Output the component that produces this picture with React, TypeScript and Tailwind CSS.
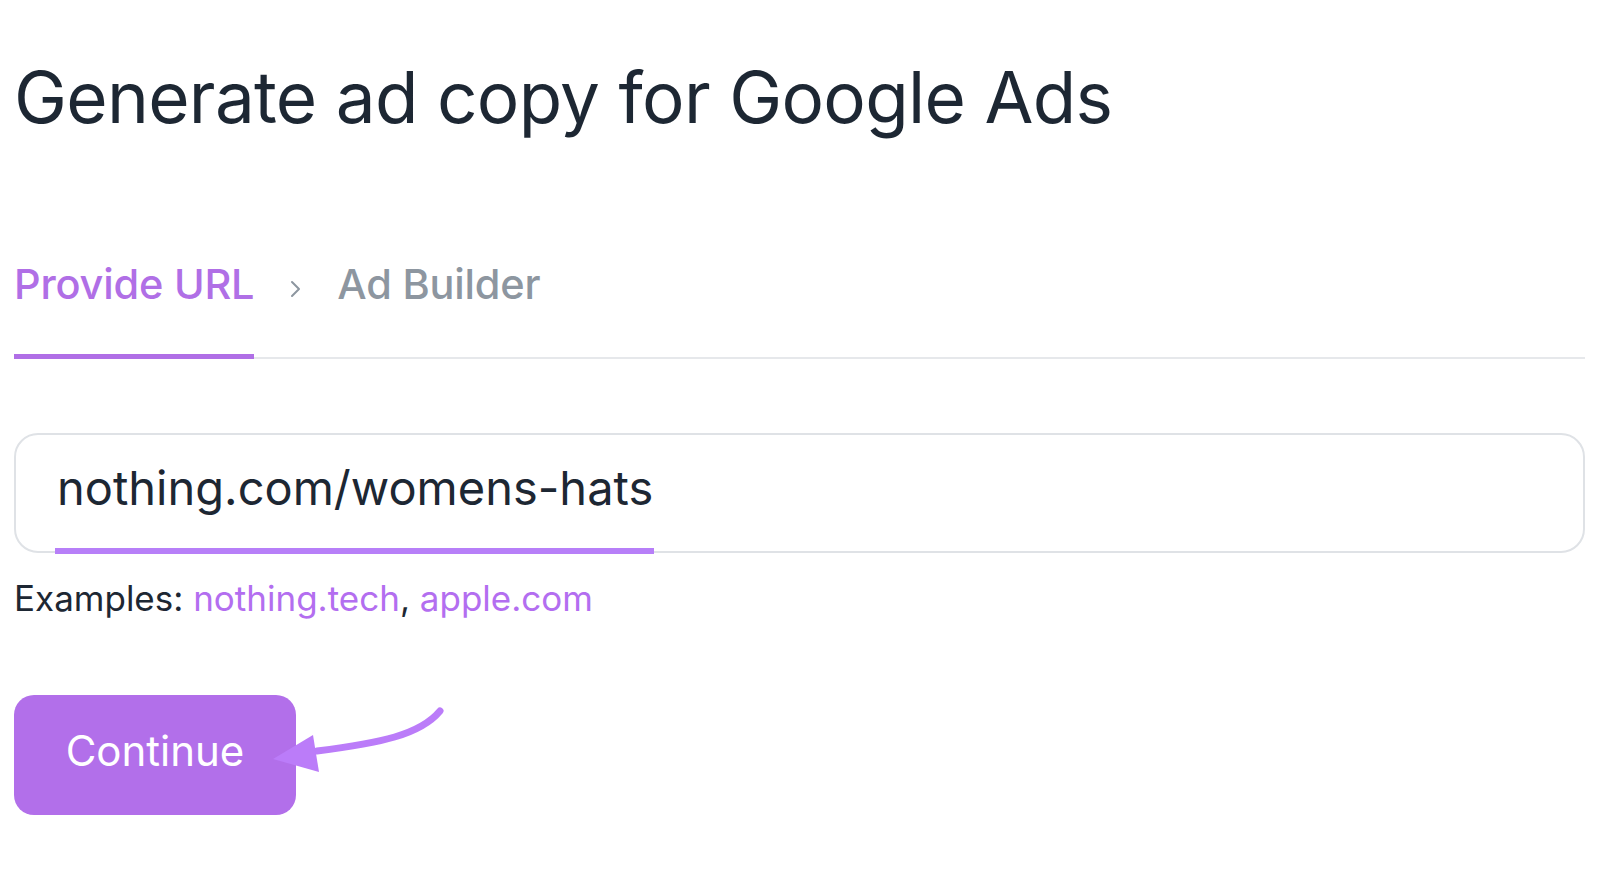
import React from "react";

export default function App() {
  return (
    <div
      className="relative w-[1600px] h-[871px] bg-white pl-[14px] pr-[15px] overflow-hidden"
      style={{ fontFamily: "Inter, 'Liberation Sans', sans-serif" }}
    >
      <h1 className="pt-[62px] text-[71px] leading-[71px] font-normal text-[#1d2733] tracking-[-0.01em]">
        Generate ad copy for Google Ads
      </h1>

      <div className="mt-[130px] flex items-end border-b-2 border-[#e6e8eb]">
        <div className="relative pb-[52px] text-[41.5px] leading-[42px] font-medium text-[#b06fe6] tracking-[-0.005em]">
          Provide URL
          <span className="absolute left-0 right-0 bottom-[-2px] h-[5px] bg-[#b06fe6]" />
        </div>
        <div className="pb-[59px] ml-[36px] w-[12px] flex items-end">
          <svg width="11" height="18" viewBox="0 0 11 18">
            <polyline
              points="2,2 9,9 2,16"
              fill="none"
              stroke="#8d96a0"
              strokeWidth="2"
              strokeLinecap="round"
              strokeLinejoin="round"
            />
          </svg>
        </div>
        <div className="pb-[52px] ml-[35px] text-[41.5px] leading-[42px] font-medium text-[#8d96a0] tracking-[-0.005em]">
          Ad Builder
        </div>
      </div>

      <div className="relative mt-[74px] h-[120px] rounded-[24px] border-2 border-[#dfe2e6] flex items-center pl-[41px] pb-[12px]">
        <span className="text-[47px] leading-[47px] text-[#1d2733]">
          nothing.com/womens-hats
        </span>
        <span className="absolute left-[39px] bottom-[-3px] w-[599px] h-[6px] bg-[#b77ff8]" />
      </div>

      <div className="mt-[24px] text-[35px] leading-[42px] text-[#1d2733]">
        Examples: <span className="text-[#b36ef0]">nothing.tech</span>,{" "}
        <span className="text-[#b36ef0]">apple.com</span>
      </div>

      <button className="mt-[76px] w-[282px] h-[120px] rounded-[20px] bg-[#b26fea] text-white text-[42px] leading-[42px] font-normal flex items-center justify-center pb-[8px]">
        Continue
      </button>

      <svg
        className="absolute left-[260px] top-[690px]"
        width="200"
        height="90"
        viewBox="0 0 200 90"
      >
        <path
          d="M180 21 C 160 45, 120 53, 57 61"
          fill="none"
          stroke="#bb7cf9"
          strokeWidth="7"
          strokeLinecap="round"
        />
        <polygon points="13,69 53,45 59,82" fill="#bb7cf9" />
      </svg>
    </div>
  );
}
